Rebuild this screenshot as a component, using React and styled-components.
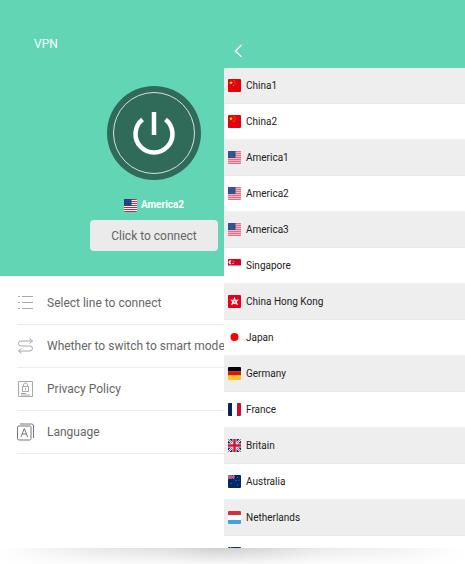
// Third party libraries
import React, { useState } from 'react';
import styled, { createGlobalStyle } from 'styled-components';

const GlobalStyle = createGlobalStyle`
  * {
    box-sizing: border-box;
  }

  body {
    margin: 0;
    background-color: #fff;
    font-family: Roboto, 'Liberation Sans', sans-serif;
  }

  button {
    margin: 0;
    border: 0;
    font-family: inherit;
    cursor: pointer;
  }
`;

const Page = styled.div`
  display: flex;
  flex-direction: column;
  height: 100vh;
`;

const Screens = styled.main`
  display: grid;
  grid-template-columns: 224fr 241fr;
  flex: 1;
  min-height: 0;
  overflow: hidden;
`;

const Shadow = styled.div`
  height: 16px;
  background:
    linear-gradient(to bottom, rgba(255, 255, 255, 0), rgba(255, 255, 255, .85)),
    linear-gradient(to right, #fff, #e9e9e9 20%, #e0e0e0 35%, #cfcfcf 47%, #dadada 58%, #ececec 70%, #f2f2f2 85%, #fff);
`;

// Home screen, the country list cuts off its right side
const Home = styled.section`
  min-width: 0;
  overflow: hidden;
`;

const HomeInner = styled.div`
  min-width: 308px;
`;

const Hero = styled.header`
  display: flex;
  flex-direction: column;
  align-items: center;
  height: 276px;
  padding-top: 34px;
  color: #fff;
  background-color: #61d5b4;
`;

const Title = styled.h1`
  align-self: flex-start;
  margin: 0 0 32px 34px;
  font-size: 12px;
  font-weight: 400;
  line-height: 20px;
`;

const PowerButton = styled.button`
  display: flex;
  width: 94px;
  height: 94px;
  padding: 0;
  border-radius: 50%;
  background-color: #306b5a;
`;

const Current = styled.div`
  display: flex;
  align-items: center;
  gap: 4px;
  margin: 16px 0 6px;
  font-size: 10px;
  font-weight: 700;
  line-height: 18px;
`;

const ConnectButton = styled.button`
  width: 128px;
  height: 31px;
  padding: 0;
  border-radius: 4px;
  color: #666;
  background-color: #ebebeb;
  font-size: 12px;
`;

const Menu = styled.nav`
  padding: 6px 0 0 17px;
`;

const MenuItem = styled.button`
  display: flex;
  align-items: center;
  gap: 13px;
  width: 100%;
  height: 43px;
  padding: 0;
  border-bottom: 1px solid #ececec;
  color: #666;
  background-color: #fff;
  font-size: 12px;
  white-space: nowrap;
`;

const Countries = styled.section`
  display: flex;
  flex-direction: column;
  min-width: 0;
  min-height: 0;
  overflow: hidden;
  background-color: #fff;
`;

const Toolbar = styled.header`
  display: flex;
  flex-shrink: 0;
  align-items: flex-end;
  height: 68px;
  padding: 0 8px 9px;
  background-color: #61d5b4;
`;

const BackButton = styled.button`
  display: flex;
  padding: 0;
  background: none;
`;

const List = styled.ul`
  margin: 0;
  padding: 0;
  list-style-type: none;
`;

const CountryRow = styled.button`
  display: flex;
  align-items: center;
  gap: 5px;
  width: 100%;
  height: 36px;
  padding: 0 4px;
  border-bottom: 1px solid ${props => props.$shaded ? '#e8e8e8' : '#f0f0f0'};
  color: #222;
  background-color: ${props => props.$shaded ? '#eee' : '#fff'};
  font-size: 10px;
  text-align: left;
`;

const FlagBox = styled.svg`
  flex-shrink: 0;
  width: 13px;
  height: 13px;
  border-radius: 1px;
`;

const Stars = ({ points, fill, size = 1 }) => points.map(([x, y]) => (
  <circle key={`${x}-${y}`} cx={x} cy={y} r={size} fill={fill} />
));

const StarsAndStripes = ({ base, stripe, canton }) => (
  <>
    <rect width="26" height="26" fill={base} />
    <path d="M0 1h26M0 5h26M0 9h26M0 13h26M0 17h26M0 21h26M0 25h26" stroke={stripe} strokeWidth="2" />
    <rect width="15" height="14" fill={canton} />
    <Stars points={[[3, 3], [7, 3], [11, 3], [5, 7], [9, 7], [3, 11], [7, 11], [11, 11]]} fill="#7088b8" size={0.7} />
  </>
);

const flags = {
  china: (
    <>
      <rect width="26" height="26" fill="#e3000f" />
      <path d="M6 3l1 3h3L7.600 8l1 3L6 9.200 3.400 11l1-3L2 6h3z" fill="#ffde00" />
      <Stars points={[[12, 3], [14, 6], [14, 10], [11, 13]]} fill="#f0a000" />
    </>
  ),
  america: <StarsAndStripes base="#efb4bf" stripe="#de6f85" canton="#2f4f8d" />,
  americaBright: <StarsAndStripes base="#fff" stripe="#d02040" canton="#1f3f7d" />,
  singapore: (
    <>
      <rect width="26" height="26" fill="#fff" />
      <rect width="26" height="13" fill="#d80027" />
      <path d="M7 3a4 4 0 1 0 0 7 4.500 4.500 0 0 1 0-7z" fill="#fff" />
      <Stars points={[[10, 4], [12, 6], [11, 9], [9, 9]]} fill="#fff" size={0.8} />
    </>
  ),
  hongkong: (
    <>
      <rect width="26" height="26" fill="#e6001f" />
      <path d="M13 4l2.500 6 6-.8-4 4.800 2.600 6L13 17.500 5.900 20l2.600-6-4-4.800 6 .8z" fill="#fff" />
      <path d="M13 13V9M13 13l4-1M13 13l2 4M13 13l-2 4M13 13l-4-1" stroke="#e6001f" strokeWidth=".7" />
    </>
  ),
  japan: (
    <>
      <rect width="26" height="26" fill="#fff" />
      <circle cx="13" cy="12" r="8" fill="#fa0000" />
    </>
  ),
  germany: (
    <>
      <rect width="26" height="9" fill="#000" />
      <rect y="9" width="26" height="8" fill="#dd1408" />
      <rect y="17" width="26" height="9" fill="#ffc31a" />
    </>
  ),
  france: (
    <>
      <rect width="26" height="26" fill="#fff" />
      <rect width="8" height="26" fill="#042654" />
      <rect x="18" width="8" height="26" fill="#ce0c33" />
    </>
  ),
  britain: (
    <>
      <rect width="26" height="26" fill="#012a6c" />
      <path d="M0 0l26 26M26 0L0 26" stroke="#fff" strokeWidth="4" />
      <path d="M0 0l26 26M26 0L0 26" stroke="#d8103a" strokeWidth="1.500" />
      <path d="M13 0v26M0 13h26" stroke="#fff" strokeWidth="8" />
      <path d="M13 0v26M0 13h26" stroke="#d8103a" strokeWidth="5" />
    </>
  ),
  australia: (
    <>
      <rect width="26" height="26" fill="#002868" />
      <path d="M0 0l13 8M13 0L0 8" stroke="#b9c6de" strokeWidth="1.500" />
      <path d="M6.500 0v8M0 4h13" stroke="#e8c0cc" strokeWidth="3" />
      <path d="M6.500 0v8M0 4h13" stroke="#d8103a" strokeWidth="1.600" />
      <Stars points={[[19, 5], [22, 10], [16, 11], [19, 20], [6, 17]]} fill="#8094bc" />
    </>
  ),
  netherlands: (
    <>
      <rect width="26" height="26" fill="#fff" />
      <rect width="26" height="8" fill="#d22f42" />
      <rect y="18" width="26" height="8" fill="#479fe0" />
    </>
  ),
  // Only the top edge shows above the fold
  blue: (
    <>
      <rect width="26" height="26" fill="#0a2a80" />
      <Stars points={[[5, 2], [9, 3]]} fill="#e8c840" size={1.4} />
    </>
  ),
};

const Flag = ({ code }) => (
  <FlagBox viewBox="0 0 26 26" aria-hidden="true">
    {flags[code]}
  </FlagBox>
);

const MenuIcon = ({ children, color = '#a8a8a8' }) => (
  <svg width="17" height="18" viewBox="0 0 17 18" fill="none" stroke={color} strokeWidth="1" aria-hidden="true">
    {children}
  </svg>
);

const menuItems = [
  {
    name: 'Select line to connect',
    icon: (
      <MenuIcon>
        <path d="M5 2.500h11M5 8.500h11M5 14.500h11M1 2.500h2M1 8.500h2M1 14.500h2" />
      </MenuIcon>
    ),
  },
  {
    name: 'Whether to switch to smart mode',
    icon: (
      <MenuIcon>
        <path d="M15.500 4H4a2.500 2.500 0 0 0 0 5h9a2.500 2.500 0 0 1 0 5H1.500M12.500 1.500L15.500 4l-3 2.500M4.500 11.500L1.500 14l3 2.500" />
      </MenuIcon>
    ),
  },
  {
    name: 'Privacy Policy',
    icon: (
      <MenuIcon>
        <path d="M1.500 1.500h14v15h-14zM5.500 6.500h6v5h-6zM6.500 6.500V5a2 2 0 0 1 4 0v1.500M8.500 8v2M4 13.500h5M4 15h9" />
      </MenuIcon>
    ),
  },
  {
    name: 'Language',
    icon: (
      <MenuIcon color="#777">
        <rect x=".5" y="3" width="13.500" height="14" rx="1.500" />
        <path d="M3 1h11.500a2 2 0 0 1 2 2v12M4 14l3.300-8.500L10.600 14M5.200 11h4.200" />
      </MenuIcon>
    ),
  },
];

const countries = [
  { name: 'China1', flag: 'china' },
  { name: 'China2', flag: 'china' },
  { name: 'America1', flag: 'america' },
  { name: 'America2', flag: 'america' },
  { name: 'America3', flag: 'america' },
  { name: 'Singapore', flag: 'singapore' },
  { name: 'China Hong Kong', flag: 'hongkong' },
  { name: 'Japan', flag: 'japan' },
  { name: 'Germany', flag: 'germany' },
  { name: 'France', flag: 'france' },
  { name: 'Britain', flag: 'britain' },
  { name: 'Australia', flag: 'australia' },
  { name: 'Netherlands', flag: 'netherlands' },
  { name: '', flag: 'blue' },
];

const App = () => {
  const [selected, setSelected] = useState(countries[3]);

  return (
    <Page>
      <GlobalStyle />
      <Screens>
        <Home>
          <HomeInner>
            <Hero>
              <Title>VPN</Title>
              <PowerButton aria-label="Power">
                <svg width="94" height="94" viewBox="0 0 94 94" fill="none" stroke="#fff">
                  <circle cx="47" cy="47" r="40.500" strokeOpacity=".8" />
                  <path d="M35.500 33.500a18.500 18.500 0 1 0 23 0M47 26v23" strokeWidth="4.500" />
                </svg>
              </PowerButton>
              <Current>
                <Flag code={selected.flag === 'america' ? 'americaBright' : selected.flag} />
                {selected.name}
              </Current>
              <ConnectButton>Click to connect</ConnectButton>
            </Hero>
            <Menu>
              {menuItems.map(item => (
                <MenuItem key={item.name}>
                  {item.icon}
                  {item.name}
                </MenuItem>
              ))}
            </Menu>
          </HomeInner>
        </Home>
        <Countries>
          <Toolbar>
            <BackButton aria-label="Back">
              <svg width="14" height="16" viewBox="0 0 14 16" fill="none" stroke="#fff" strokeWidth="1.300">
                <path d="M9.500 2L3.500 8l6 6" />
              </svg>
            </BackButton>
          </Toolbar>
          <List>
            {countries.map((country, index) => (
              <li key={country.name}>
                <CountryRow $shaded={index % 2 === 0} onClick={() => setSelected(country)}>
                  <Flag code={country.flag} />
                  {country.name}
                </CountryRow>
              </li>
            ))}
          </List>
        </Countries>
      </Screens>
      <Shadow />
    </Page>
  );
};

export default App;
